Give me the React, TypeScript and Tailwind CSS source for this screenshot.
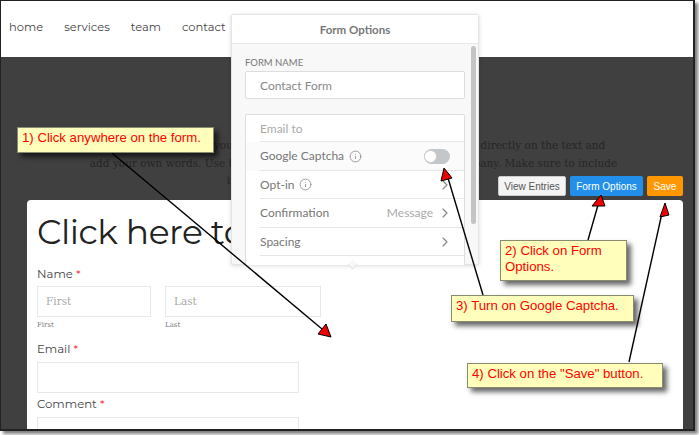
import { ChevronRight, Info } from 'lucide-react';

const navItems = ['home', 'services', 'team', 'contact'];

const montserrat = 'font-["Montserrat","Inter","Noto_Sans",sans-serif]';

function Row({ label, info, value, chevron, h }: { label: string; info?: boolean; value?: string; chevron?: boolean; h: string }) {
  return (
    <div className="pl-[14px]">
      <div className={`flex items-center border-b border-[#e6e6e6] pr-[14px] text-[12px] text-[#777] ${h}`}>
        <span>{label}</span>
        {info && <Info className="ml-[5px] h-[13px] w-[13px] text-[#888]" strokeWidth={1.5} />}
        <span className="flex-1" />
        {value && <span className="mr-[4px] text-[#aaa]">{value}</span>}
        {chevron && <ChevronRight className="mr-[-3px] h-[16px] w-[16px] text-[#888]" strokeWidth={1.75} />}
      </div>
    </div>
  );
}

function FormOptions() {
  return (
    <div className="absolute left-[231px] top-[14px] h-[251px] w-[248px] rounded-[2px] border border-[#e4e4e4] bg-[#f8f8f8] font-['Lato',sans-serif] shadow-[0_1px_4px_rgba(0,0,0,0.15)]">
      <div className="flex h-[29px] items-center justify-center border-b border-[#e8e8e8] bg-white pt-[2px] text-[11.5px] font-bold text-[#777]">
        Form Options
      </div>
      <div className="h-[221px] overflow-hidden px-[13px] pt-[13px]">
        <div className="text-[9.5px] leading-[11px] text-[#777]">FORM NAME</div>
        <div className="mt-[3px] flex h-[28px] w-[220px] items-center rounded-[2px] border border-[#ddd] bg-white pl-[14px] pt-[1px] text-[12px] text-[#888]">
          Contact Form
        </div>
        <div className="mt-[15px] h-[160px] w-[220px] rounded-[2px] border border-[#ddd] bg-white">
          <div className="pl-[14px]">
            <div className="flex h-[27px] items-center border-b border-[#e6e6e6] pt-[2px] text-[12px] text-[#aaa]">Email to</div>
          </div>
          <div className="bg-[#fbfbfb] pl-[14px]">
            <div className="flex h-[29px] items-center border-b border-[#e6e6e6] pr-[14px] text-[12px] text-[#777]">
              <span>Google Captcha</span>
              <Info className="ml-[5px] h-[13px] w-[13px] text-[#888]" strokeWidth={1.5} />
              <span className="flex-1" />
              <span className="flex h-[15px] w-[26px] items-center rounded-full bg-[#c3c7ca]">
                <span className="h-[13px] w-[13px] rounded-full border border-[#ccc] bg-white" />
              </span>
            </div>
          </div>
          <Row label="Opt-in" info chevron h="h-[28px]" />
          <Row label="Confirmation" value="Message" chevron h="h-[29px]" />
          <Row label="Spacing" chevron h="h-[28px]" />
        </div>
      </div>
      <div className="absolute right-[2px] top-[31px] h-[178px] w-[5px] rounded-full bg-[#c4c4c4]" />
      <div className="absolute bottom-[-4px] left-[117px] h-[7px] w-[7px] rotate-45 border-b border-r border-[#e4e4e4] bg-[#f8f8f8]" />
    </div>
  );
}

function Callout({ className, children }: { className: string; children: React.ReactNode }) {
  return (
    <div className={`absolute border border-[#8a8a70] bg-[#ffffbb] pl-[4px] pt-[2px] font-["Liberation_Sans",sans-serif] text-[13.2px] leading-[16px] text-[#ff0000] shadow-[4px_4px_5px_rgba(0,0,0,0.6)] ${className}`}>
      {children}
    </div>
  );
}

function Arrows() {
  const lines = [
    { x1: 112, y1: 153, x2: 322, y2: 329, head: '331,337 318,334 326,324' },
    { x1: 588, y1: 240, x2: 598, y2: 205, head: '601,195 592,206 605,206' },
    { x1: 483, y1: 295, x2: 448, y2: 178, head: '444,168 441,181 452,178' },
    { x1: 629, y1: 362, x2: 662, y2: 213, head: '665,203 660,217 669,215' },
  ];
  return (
    <svg className="absolute left-0 top-0" width="699" height="435">
      {lines.map((l, i) => (
        <g key={i}>
          <line x1={l.x1} y1={l.y1} x2={l.x2} y2={l.y2} stroke="#000" strokeWidth="1.4" />
          <polygon points={l.head} fill="#f00000" stroke="#000" strokeWidth="1" />
        </g>
      ))}
    </svg>
  );
}

function FieldLabel({ children }: { children: string }) {
  return (
    <div className="text-[11.7px] leading-[16px] text-[#444]">
      {children} <span className="text-[#f03030]">*</span>
    </div>
  );
}

export default function App() {
  return (
    <div className="relative h-[435px] w-[699px] overflow-hidden bg-white">
      <div className={`flex h-[431px] w-[695px] flex-col overflow-hidden border-b-2 border-l border-r-2 border-t border-[#222] shadow-[3px_3px_3px_rgba(0,0,0,0.5)] ${montserrat}`}>
        <nav className="flex h-[56px] shrink-0 items-start gap-[21px] bg-white pl-[8px] pt-[18px] text-[11.5px] leading-[17px] text-[#444]">
          {navItems.map((item) => (
            <span key={item}>{item}</span>
          ))}
        </nav>
        <div className="flex min-h-0 flex-1 flex-col bg-[#404040] pl-[26px] pr-[10px]">
          <div className="mt-[80px] h-[63px] shrink-0 whitespace-nowrap pr-[3px] text-center font-['DejaVu_Serif',serif] text-[10.5px] leading-[17.5px] text-[#262626]">
            <div>Give a short intro so you can add details there about your forms. Click directly on the text and</div>
            <div>add your own words. Use this space to tell people about your great company. Make sure to include</div>
            <div>information about your form and why it is here.</div>
          </div>
          <div className="min-h-0 flex-1 overflow-hidden rounded-t-[4px] bg-white pl-[10px] pt-[9px]">
            <div className="whitespace-nowrap text-[34.5px] leading-[46px] tracking-[-0.5px] text-[#222]">Click here to</div>
            <div className="mt-[11px]">
              <FieldLabel>Name</FieldLabel>
            </div>
            <div className="mt-[4px] flex gap-[14px]">
              <div className="w-[114px]">
                <div className="flex h-[31px] items-center border border-[#e8e8e8] pl-[8px] font-['DejaVu_Serif',serif] text-[10.5px] text-[#aaa]">First</div>
                <div className="mt-[3px] font-['DejaVu_Serif',serif] text-[7px] leading-[10px] text-[#777]">First</div>
              </div>
              <div className="w-[156px]">
                <div className="flex h-[31px] items-center border border-[#e8e8e8] pl-[8px] font-['DejaVu_Serif',serif] text-[10.5px] text-[#aaa]">Last</div>
                <div className="mt-[3px] font-['DejaVu_Serif',serif] text-[7px] leading-[10px] text-[#777]">Last</div>
              </div>
            </div>
            <div className="mt-[11px]">
              <FieldLabel>Email</FieldLabel>
            </div>
            <div className="mt-[5px] h-[31px] w-[262px] border border-[#e8e8e8]" />
            <div className="mt-[3px]">
              <FieldLabel>Comment</FieldLabel>
            </div>
            <div className="mt-[5px] h-[31px] w-[262px] border border-[#e8e8e8]" />
          </div>
        </div>
      </div>

      <div className="absolute left-[498px] top-[176px] flex gap-[4px] font-['Liberation_Sans',sans-serif] text-[10px]">
        <div className="flex h-[20px] w-[68px] items-center justify-center rounded-[2px] border border-[#ccc] bg-[#f4f4f4] text-[#555]">View Entries</div>
        <div className="flex h-[20px] w-[73px] items-center justify-center rounded-[2px] bg-[#2290ea] text-white">Form Options</div>
        <div className="flex h-[20px] w-[36px] items-center justify-center rounded-[2px] bg-[#ff9800] text-white">Save</div>
      </div>

      <FormOptions />
      <Arrows />

      <Callout className="left-[17px] top-[127px] h-[26px] w-[197px]">1) Click anywhere on the form.</Callout>
      <Callout className="left-[500px] top-[240px] h-[41px] w-[127px]">2) Click on Form Options.</Callout>
      <Callout className="left-[451px] top-[295px] h-[27px] w-[183px]">3) Turn on Google Captcha.</Callout>
      <Callout className="left-[467px] top-[363px] h-[25px] w-[196px]">4) Click on the "Save" button.</Callout>
    </div>
  );
}
